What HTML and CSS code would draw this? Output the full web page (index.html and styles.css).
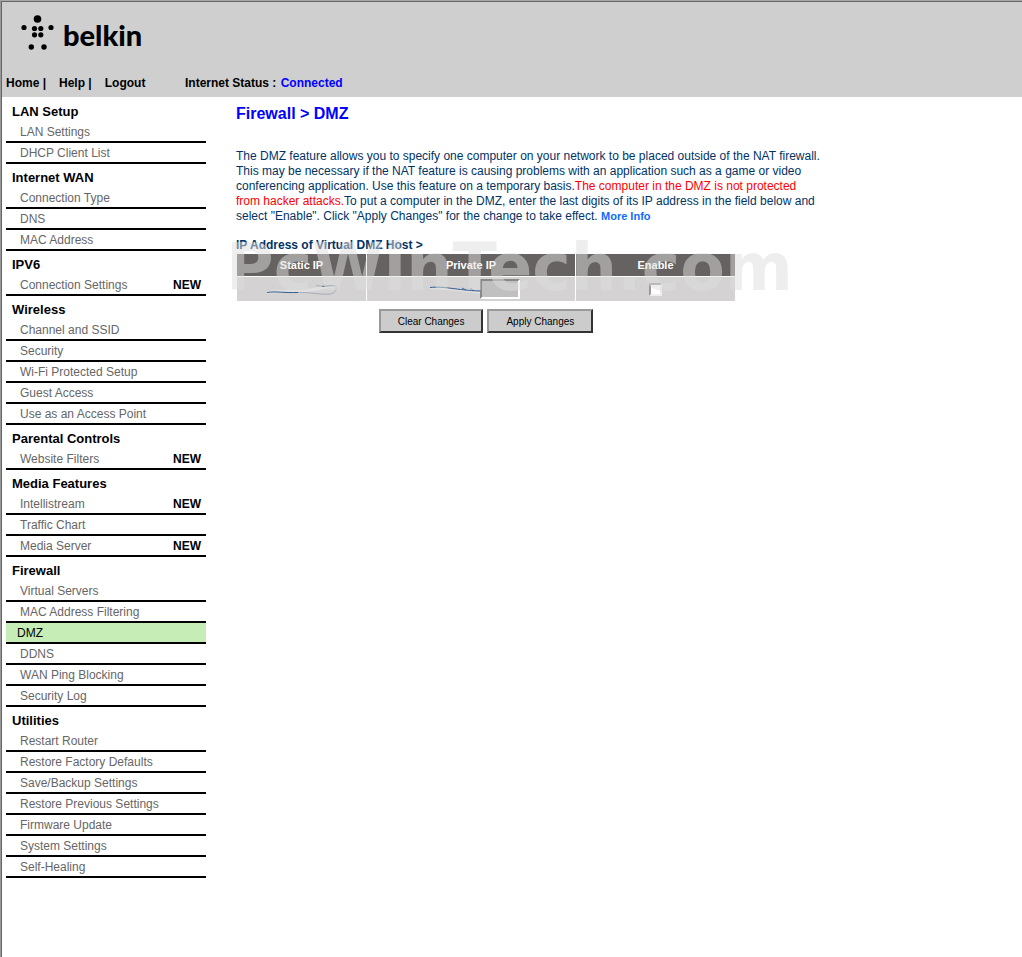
FILE: index.html
```html
<!DOCTYPE html>
<html lang="en">
<head>
<meta charset="utf-8">
<title>Belkin Router - DMZ</title>
<link rel="stylesheet" href="styles.css">
</head>
<body>
<div class="page">
  <header class="top">
    <svg class="logo" width="130" height="44" viewBox="0 0 130 44" role="img" aria-label="belkin">
      <circle cx="17.5" cy="7" r="3.8"/>
      <circle cx="4" cy="15.5" r="2.6"/><circle cx="31" cy="15.5" r="2.6"/>
      <circle cx="14.5" cy="16.5" r="2.6"/><circle cx="20.8" cy="16.5" r="2.6"/>
      <circle cx="14.5" cy="22.8" r="2.6"/><circle cx="20.8" cy="22.8" r="2.6"/>
      <circle cx="11.3" cy="35" r="2.7"/><circle cx="24" cy="35" r="2.7"/>
      <text class="logo-text" x="43" y="34">belkin</text>
    </svg>
    <div class="bar">
      <nav class="links"><a href="#">Home |</a><a href="#">Help |</a><a href="#">Logout</a></nav>
      <p class="status">Internet Status : <span class="connected">Connected</span></p>
    </div>
  </header>
  <div class="body">
    <nav class="side">
      <h2>LAN Setup</h2>
      <ul><li><a href="#">LAN Settings</a></li><li><a href="#">DHCP Client List</a></li></ul>
      <h2>Internet WAN</h2>
      <ul><li><a href="#">Connection Type</a></li><li><a href="#">DNS</a></li><li><a href="#">MAC Address</a></li></ul>
      <h2>IPV6</h2>
      <ul><li><a href="#">Connection Settings</a><b>NEW</b></li></ul>
      <h2>Wireless</h2>
      <ul><li><a href="#">Channel and SSID</a></li><li><a href="#">Security</a></li><li><a href="#">Wi-Fi Protected Setup</a></li><li><a href="#">Guest Access</a></li><li><a href="#">Use as an Access Point</a></li></ul>
      <h2>Parental Controls</h2>
      <ul><li><a href="#">Website Filters</a><b>NEW</b></li></ul>
      <h2>Media Features</h2>
      <ul><li><a href="#">Intellistream</a><b>NEW</b></li><li><a href="#">Traffic Chart</a></li><li><a href="#">Media Server</a><b>NEW</b></li></ul>
      <h2>Firewall</h2>
      <ul><li><a href="#">Virtual Servers</a></li><li><a href="#">MAC Address Filtering</a></li><li class="current"><a href="#">DMZ</a></li><li><a href="#">DDNS</a></li><li><a href="#">WAN Ping Blocking</a></li><li><a href="#">Security Log</a></li></ul>
      <h2>Utilities</h2>
      <ul><li><a href="#">Restart Router</a></li><li><a href="#">Restore Factory Defaults</a></li><li><a href="#">Save/Backup Settings</a></li><li><a href="#">Restore Previous Settings</a></li><li><a href="#">Firmware Update</a></li><li><a href="#">System Settings</a></li><li><a href="#">Self-Healing</a></li></ul>
    </nav>
    <main class="main">
      <h1>Firewall &gt; DMZ</h1>
      <p class="intro">The DMZ feature allows you to specify one computer on your network to be placed outside of the NAT firewall. This may be necessary if the NAT feature is causing problems with an application such as a game or video conferencing application. Use this feature on a temporary basis.<span class="warn">The computer in the DMZ is not protected from hacker attacks.</span>To put a computer in the DMZ, enter the last digits of its IP address in the field below and select "Enable". Click "Apply Changes" for the change to take effect. <a class="more" href="#">More Info</a></p>
      <form class="host">
        <h3>IP Address of Virtual DMZ Host &gt;</h3>
        <table>
          <thead><tr><th class="c1">Static IP</th><th class="c2">Private IP</th><th class="c3">Enable</th></tr></thead>
          <tbody><tr>
            <td><div class="cell"><svg width="72" height="14" viewBox="0 0 72 14" aria-hidden="true"><path d="M1 10.500C15 8 28 11 42 8.500S58 5 68 3.500" fill="none" stroke="#e0e0e2" stroke-width="3"/><path d="M1 10.500C10 9 17 11 32 10.500" fill="none" stroke="#2d5d8e"/><path d="M32 10.500C45 10 54 13 64 12C71 11 72 4 68 3.500C62 3 58 5 50 3.500" fill="none" stroke="#a5adb8"/><path d="M56 4.500L68 3.500" stroke="#667c96"/></svg></div></td>
            <td><div class="cell ip"><svg width="58" height="16" viewBox="0 0 58 16" aria-hidden="true"><path d="M2 7C20 8 35 9 55 12" fill="none" stroke="#e0e0e2" stroke-width="2"/><path d="M2 6.500C17 5 27 9 52 10" fill="none" stroke="#2d5d8e"/><path d="M34 7L38 9M42 7L46 10" stroke="#416a94"/></svg><input class="digits" type="text" aria-label="Last digits of private IP"></div></td>
            <td><div class="cell"><input class="tick" type="checkbox" aria-label="Enable"></div></td>
          </tr></tbody>
        </table>
        <div class="watermark" aria-hidden="true">PcWinTech.com</div>
        <div class="buttons"><button type="reset">Clear Changes</button><button type="button">Apply Changes</button></div>
      </form>
    </main>
  </div>
</div>
</body>
</html>
```
FILE: styles.css
```css
* { box-sizing: border-box; }
body { margin: 0; background: #fff; color: #000; font: 12px/15px "Liberation Sans", Arial, sans-serif; }
h1, h2, h3, p, ul { margin: 0; padding: 0; }
a { color: inherit; text-decoration: none; }
.page { min-height: 100vh; border-left: 1px solid #999; border-top: 1px solid #a8a8a8; box-shadow: inset 1px 1px #666; padding: 1px 0 0 1px; }
.top { background: #cfcfcf; padding: 10px 4px 6px; }
.logo { display: block; margin-left: 14px; }
.logo-text { font: 900 29px Lato, sans-serif; }
.bar { display: flex; margin-top: 20px; font-weight: bold; }
.links { display: flex; gap: 13px; width: 179px; }
.connected { color: #00f; margin-left: 1px; }
.body { display: flex; padding: 1px 4px 0; }
.side { flex: 0 0 200px; }
.side h2 { font-size: 13px; line-height: 16px; padding: 6px 6px 2px; }
.side ul { list-style: none; }
.side li { display: flex; justify-content: space-between; height: 21px; line-height: 20px; padding: 0 5px 0 14px; border-bottom: 2px solid #000; color: #666; }
.side b { color: #000; }
.side .current { padding-left: 11px; background: #c6edb5; color: #000; }
.main { flex: 1; max-width: 616px; padding: 7px 0 0 30px; color: #036; }
h1 { font-size: 16px; line-height: 18px; color: #00f; }
.intro { margin-top: 26px; }
.warn { color: #f00; }
.more { color: #0c6cff; font-size: 11px; font-weight: bold; }
.host { position: relative; max-width: 500px; margin-top: 14px; }
h3 { font-size: 12px; line-height: 15px; }
table { width: 100%; border-spacing: 1px; table-layout: fixed; }
th { height: 22px; padding: 0; background: #666261; color: #fff; font-size: 11px; line-height: 14px; }
td { height: 24px; padding: 0; background: #d4d2d2; }
.c1 { width: 129px; }
.c2 { width: 208px; }
.cell { display: flex; align-items: center; justify-content: center; height: 24px; }
.ip { padding-left: 6px; }
.digits { width: 40px; height: 20px; margin-left: -6px; border: 2px solid; border-color: #888 #fff #fff #888; background: #c0c0c0; }
.tick { appearance: none; width: 13px; height: 13px; margin: 0; border: 2px solid; border-color: #999 #eee #eee #999; background: #fff; }
.watermark { position: absolute; left: -10px; top: -8px; font: bold 65px/75px "DejaVu Sans", sans-serif; color: rgba(221, 221, 221, .5); pointer-events: none; white-space: nowrap; }
.buttons { display: flex; justify-content: center; gap: 4px; margin-top: 7px; }
button { height: 24px; padding: 0 17px; border: 2px solid; border-color: #999 #333 #333 #999; background: #ccc; color: #000; font: 10px "Liberation Sans", Arial, sans-serif; }
```
